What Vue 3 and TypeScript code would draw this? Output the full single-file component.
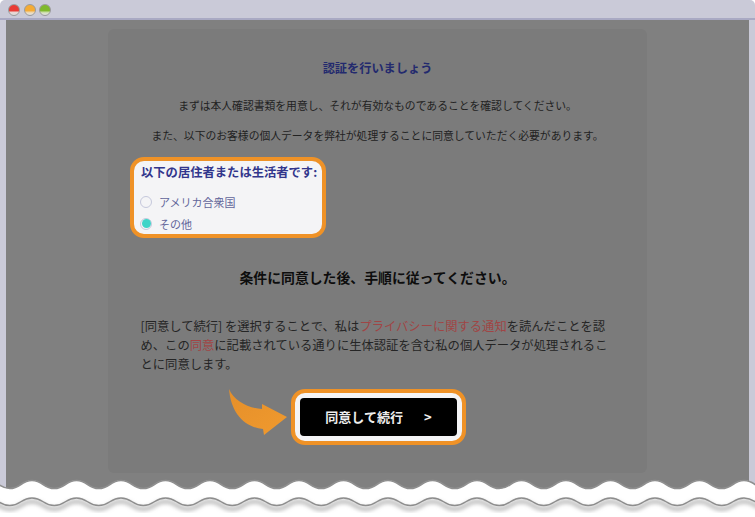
<script setup lang="ts">
const width = 755
const period = 44.5
const phase = 32

function wavePath(peakY: number, amp: number): string {
  let x = phase - period * 2
  let d = `M ${x} ${peakY}`
  while (x < width + period) {
    d += ` C ${x + period * 0.25} ${peakY}, ${x + period * 0.25} ${peakY + amp}, ${x + period * 0.5} ${peakY + amp}`
    d += ` C ${x + period * 0.75} ${peakY + amp}, ${x + period * 0.75} ${peakY}, ${x + period} ${peakY}`
    x += period
  }
  return d
}

const top = wavePath(23.5, 8)
const bottom = wavePath(41, 7.5)
const band = `${top} L ${width + 100} 62 L -100 62 Z`
</script>

<template>
  <div class="page">
    <div class="window">
      <header class="titlebar">
        <span class="light red"></span>
        <span class="light amber"></span>
        <span class="light green"></span>
      </header>
      <main class="stage">
        <section class="card">
          <h1 class="title">認証を行いましょう</h1>
          <p class="lead">まずは本人確認書類を用意し、それが有効なものであることを確認してください。</p>
          <p class="lead second">また、以下のお客様の個人データを弊社が処理することに同意していただく必要があります。</p>

          <div class="residence">
            <div class="residence-title">以下の居住者または生活者です:</div>
            <label class="option"><span class="radio"></span>アメリカ合衆国</label>
            <label class="option"><span class="radio checked"></span>その他</label>
          </div>

          <h2 class="notice">条件に同意した後、手順に従ってください。</h2>

          <p class="terms">[同意して続行] を選択することで、私は<span class="link">プライバシーに関する通知</span>を読んだことを認め、この<span class="link">同意</span>に記載されている通りに生体認証を含む私の個人データが処理されることに同意します。</p>

          <div class="action">
            <svg class="arrow" viewBox="0 0 60 48" width="60" height="48" aria-hidden="true">
              <defs>
                <linearGradient id="arrowFill" x1="0" y1="0" x2="1" y2="1">
                  <stop offset="0" stop-color="#e58f2a" />
                  <stop offset="1" stop-color="#f09a2e" />
                </linearGradient>
              </defs>
              <path d="M0 0 C5 12 19 19 33 20 L33 15 L58 28 L35 46 L34 40 C15 38 2 24 0 0 Z" fill="url(#arrowFill)" />
            </svg>
            <div class="button-ring">
              <button class="continue" type="button"><span>同意して続行</span><span class="chev">&gt;</span></button>
            </div>
          </div>
        </section>
      </main>
    </div>

    <svg class="torn" :viewBox="`0 0 ${width} 62`" :width="width" height="62" aria-hidden="true">
      <defs>
        <filter id="soft" x="-5%" y="-50%" width="110%" height="200%">
          <feGaussianBlur stdDeviation="2" />
        </filter>
      </defs>
      <path :d="band" fill="#ffffff" />
      <path :d="top" fill="none" stroke="#8f8f8f" stroke-width="1.6" />
      <path :d="bottom" fill="none" stroke="#a6a6a6" stroke-width="3" filter="url(#soft)" transform="translate(0 3.5)" />
      <path :d="bottom" fill="none" stroke="#8d8d8d" stroke-width="1.5" />
    </svg>
  </div>
</template>

<style>
html, body { margin: 0; background: #fff; }
</style>

<style scoped>
.page {
  position: relative;
  width: 755px;
  height: 517px;
  overflow: hidden;
  background: #fff;
  font-family: "Noto Sans CJK JP", "Noto Sans", sans-serif;
}
.window {
  display: flex;
  flex-direction: column;
  height: 490px;
  background: #cacad8;
  border-radius: 5px 5px 0 0;
}
.titlebar {
  display: flex;
  align-items: center;
  gap: 3.5px;
  box-sizing: border-box;
  height: 20px;
  padding: 2px 0 0 8px;
  border-bottom: 2px solid #a9a9c3;
}
.light {
  box-sizing: border-box;
  width: 12px;
  height: 12px;
  border-radius: 50%;
  border: 1px solid #9a9a9a;
}
.red { background: linear-gradient(#e93a34 0 55%, #e8d5d2 75%, #dedede); }
.amber { background: linear-gradient(#f5ab35 0 55%, #ecdcc0 78%, #dedede); }
.green { background: linear-gradient(#7fb92c 0 55%, #d8e4c0 78%, #dedede); }
.stage {
  flex: 1;
  margin: 0 6px;
  padding-top: 9px;
  background: #808080;
  min-height: 0;
}
.card {
  box-sizing: border-box;
  width: 539px;
  height: 444px;
  margin: 0 auto;
  padding-top: 30px;
  background: #7b7b7b;
  border-radius: 6px;
}
.title {
  margin: 0;
  font-size: 12.2px;
  line-height: 18px;
  font-weight: 700;
  color: #232a6e;
  text-align: center;
}
.lead {
  margin: 20px 0 0;
  font-size: 10.8px;
  line-height: 16px;
  color: #222;
  text-align: center;
}
.second { margin-top: 14px; }
.residence {
  box-sizing: border-box;
  width: 196px;
  height: 81px;
  margin: 13.5px 0 0 21.5px;
  padding: 2px 0 0 7.5px;
  background: #f4f4f6;
  border: 4px solid #ef9227;
  border-radius: 14px;
}
.residence-title {
  margin-bottom: 10px;
  font-size: 12.3px;
  line-height: 18px;
  font-weight: 700;
  color: #32368c;
  white-space: nowrap;
}
.option {
  display: flex;
  align-items: center;
  gap: 7px;
  height: 22px;
  margin-left: -1px;
  font-size: 11px;
  color: #62659a;
}
.radio {
  box-sizing: border-box;
  position: relative;
  width: 12px;
  height: 12px;
  border: 1.5px solid #c5c8dc;
  border-radius: 50%;
}
.radio.checked::after {
  content: "";
  position: absolute;
  inset: 0.5px;
  border-radius: 50%;
  background: #3dd4c8;
}
.notice {
  margin: 28.5px 0 0;
  font-size: 13.86px;
  line-height: 22px;
  font-weight: 700;
  color: #0d0d0d;
  text-align: center;
}
.terms {
  width: 472px;
  margin: 29px 0 0 32.5px;
  font-size: 12.3px;
  line-height: 19px;
  color: #252525;
}
.link { color: #a04545; }
.action {
  display: flex;
  align-items: flex-start;
  margin: 15px 0 0 121px;
}
.arrow { margin-right: 2px; flex: none; }
.button-ring {
  box-sizing: border-box;
  width: 175px;
  height: 56px;
  padding: 5px;
  background: #f4f4f6;
  border: 4px solid #ef9227;
  border-radius: 14px;
  display: flex;
}
.continue {
  flex: 1;
  display: flex;
  align-items: center;
  justify-content: center;
  gap: 21px;
  padding: 0 0 2px;
  border: 0;
  border-radius: 4px;
  background: #000;
  color: #eeeeee;
  font: 700 13px "Noto Sans CJK JP", "Noto Sans", sans-serif;
}
.torn { position: absolute; left: 0; top: 457px; }
</style>
